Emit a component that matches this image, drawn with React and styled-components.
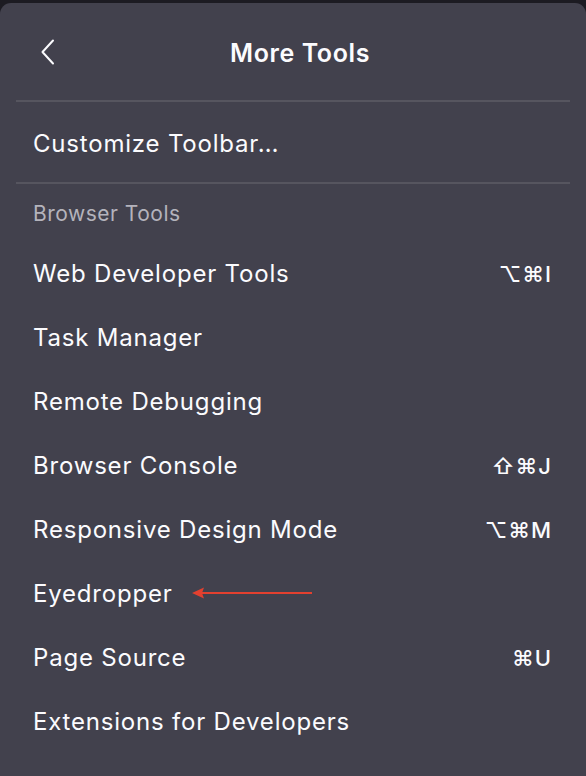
import React from "react";
import styled, { createGlobalStyle } from "styled-components";

const Global = createGlobalStyle`
  html, body { margin: 0; padding: 0; background: #1c1b22; }
  body { font-family: Inter, "Noto Sans", sans-serif; -webkit-font-smoothing: antialiased; }
`;

const Page = styled.div`
  width: 586px;
  height: 776px;
  padding-top: 3px;
  box-sizing: border-box;
  background: #1c1b22;
  overflow: hidden;
`;

const Panel = styled.div`
  height: 100%;
  background: #42414d;
  border-radius: 11px 11px 0 0;
  display: flex;
  flex-direction: column;
  color: #fbfbfe;
`;

const Header = styled.div`
  height: 97px;
  display: grid;
  grid-template-columns: 60px 1fr 60px;
  align-items: center;
  padding: 0 16px;
`;

const Back = styled.button`
  background: none;
  border: none;
  padding: 0 0 0 24px;
  display: flex;
  align-items: center;
  color: #fbfbfe;
`;

const Title = styled.div`
  text-align: center;
  font-weight: 600;
  font-size: 25px;
  letter-spacing: 0.6px;
  padding: 2px 0 0 14px;
`;

const Separator = styled.div`
  height: 2px;
  margin: 0 16px;
  background: #56555f;
`;

const Section = styled.div`
  padding: ${(p) => p.$pad || "0"};
  display: flex;
  flex-direction: column;
`;

const Label = styled.div`
  height: 56px;
  display: flex;
  align-items: center;
  padding: 3px 33px 0;
  box-sizing: border-box;
  font-size: 21px;
  letter-spacing: 0.5px;
  color: #b4b3bc;
`;

const Row = styled.div`
  height: 64px;
  box-sizing: border-box;
  display: flex;
  align-items: center;
  justify-content: space-between;
  padding: 3px 34px 0 33px;
  font-size: 24px;
  letter-spacing: 0.8px;
  position: relative;
`;

const Shortcut = styled.span`
  font-size: 22px;
  letter-spacing: 1px;
  font-weight: 500;
`;

const Arrow = styled.svg`
  position: absolute;
  left: 190px;
  top: 26px;
`;

const items = [
  ["Web Developer Tools", "⌥⌘I"],
  ["Task Manager", ""],
  ["Remote Debugging", ""],
  ["Browser Console", "⇧⌘J"],
  ["Responsive Design Mode", "⌥⌘M"],
  ["Eyedropper", "", true],
  ["Page Source", "⌘U"],
  ["Extensions for Developers", ""],
];

export default function App() {
  return (
    <Page>
      <Global />
      <Panel>
        <Header>
          <Back aria-label="Back">
            <svg width="16" height="26" viewBox="0 0 16 26">
              <path d="M13 1.5 L2.5 13 L13 24.5" fill="none" stroke="#fbfbfe" strokeWidth="2" strokeLinecap="round" strokeLinejoin="round" />
            </svg>
          </Back>
          <Title>More Tools</Title>
          <span />
        </Header>
        <Separator />
        <Section $pad="8px 0">
          <Row>Customize Toolbar…</Row>
        </Section>
        <Separator />
        <Section>
          <Label>Browser Tools</Label>
          {items.map(([name, sc, arrow]) => (
            <Row key={name}>
              <span>{name}</span>
              {sc && <Shortcut>{sc}</Shortcut>}
              {arrow && (
                <Arrow width="124" height="14" viewBox="0 0 124 14">
                  <path d="M2 7 L14 1.5 L12 7 L14 12.5 Z" fill="#e3402f" />
                  <line x1="10" y1="7" x2="122" y2="7" stroke="#e3402f" strokeWidth="2.2" />
                </Arrow>
              )}
            </Row>
          ))}
        </Section>
      </Panel>
    </Page>
  );
}
